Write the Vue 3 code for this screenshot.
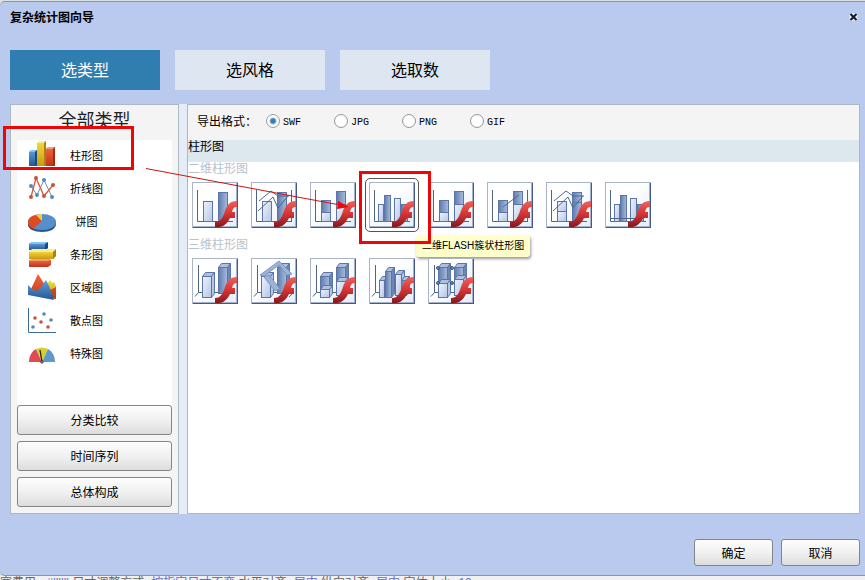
<template>
  <div class="page">
    <svg class="defs" width="0" height="0" aria-hidden="true">
      <defs>
        <linearGradient id="light" x1="0" y1="0" x2="1" y2="1"><stop offset="0" stop-color="#eef4fd"/><stop offset="1" stop-color="#b4c5e4"/></linearGradient>
        <linearGradient id="dark" x1="0" y1="0" x2="1" y2="0"><stop offset="0" stop-color="#5f7cae"/><stop offset="1" stop-color="#a9bbdc"/></linearGradient>
        <linearGradient id="flash" x1="0" y1="0" x2="0" y2="1"><stop offset="0" stop-color="#f0605a"/><stop offset="0.5" stop-color="#d43434"/><stop offset="1" stop-color="#86181c"/></linearGradient>
        <linearGradient id="blue" x1="0" y1="0" x2="0" y2="1"><stop offset="0" stop-color="#5ea0e0"/><stop offset="1" stop-color="#23598f"/></linearGradient>
        <linearGradient id="yellow" x1="0" y1="0" x2="0" y2="1"><stop offset="0" stop-color="#f7dc3e"/><stop offset="1" stop-color="#c89a10"/></linearGradient>
        <linearGradient id="red" x1="0" y1="0" x2="0" y2="1"><stop offset="0" stop-color="#f0683c"/><stop offset="1" stop-color="#c0341a"/></linearGradient>
      </defs>
    </svg>

    <div class="dialog">
      <!-- Title bar -->
      <div class="dialog-header">
        <span class="dialog-title">复杂统计图向导</span>
        <button class="close-btn" aria-label="关闭">
          <svg width="9" height="8" viewBox="0 0 9 8"><path d="M1.500 1L7.500 7M7.500 1L1.500 7" stroke="#fff" stroke-width="4"/><path d="M1.500 1L7.500 7M7.500 1L1.500 7" stroke="#111a30" stroke-width="2.200"/></svg>
        </button>
      </div>

      <!-- Wizard steps -->
      <div class="steps">
        <button v-for="s in steps" :key="s" class="step" :class="{ active: step === s }" @click="step = s">{{ s }}</button>
      </div>

      <div class="main">
        <!-- Type list -->
        <div class="side">
          <div class="side-title">全部类型</div>
          <div class="type-list">
            <button v-for="t in types" :key="t.key" class="type-row" @click="type = t.key">
              <svg width="28" height="28" viewBox="0 0 28 28">
                <g v-if="t.key === 'column'">
                  <path d="M1 11L3 9H9V25H1Z" fill="url(#blue)"/><path d="M1 11L3 9H9L7 11Z" fill="#8cc0ee"/><path d="M7 11L9 9V25H7Z" fill="#1c4a7c"/>
                  <path d="M18 8L20 6H27V25H18Z" fill="url(#red)"/><path d="M18 8L20 6H27L25 8Z" fill="#f59a7a"/><path d="M25 8L27 6V25H25Z" fill="#a02a14"/>
                  <path d="M9 2L12 0H18V25H9Z" fill="url(#yellow)"/><path d="M9 2L12 0H18L16 2Z" fill="#fbee8a"/><path d="M16 2L18 0V25H16Z" fill="#a98210"/>
                </g>
                <g v-else-if="t.key === 'line'">
                  <path d="M3 12L9 21L16 6L24 23" fill="none" stroke="#6590bd"/>
                  <path d="M3 23L8 4L16 22L25 11" fill="none" stroke="#d9583a" stroke-width="1.300"/>
                  <circle v-for="p in lineDots" :key="p[0] + '-' + p[1]" :cx="p[0]" :cy="p[1]" r="2" :fill="p[2]"/>
                </g>
                <g v-else-if="t.key === 'pie'">
                  <path d="M0 14V17C0 22 6 25 14 25S28 22 28 17V14Z" fill="#285b90"/>
                  <path d="M0 14V17C0 20 2 22 5 23L8 20Z" fill="#a82c12"/>
                  <ellipse cx="14" cy="15" rx="14" ry="8" fill="#568fc9"/>
                  <path d="M14 14L6 21C2 20 0 17 0 15C0 12 3 9 8 8Z" fill="#df4a22"/>
                  <path d="M14 14L8 8C10 7 12 7 14 7Z" fill="#f2cf38"/>
                </g>
                <g v-else-if="t.key === 'bar'">
                  <path d="M1 20H23V25L20 27H1Z" fill="url(#red)"/><path d="M1 21L3 19H23L20 21Z" fill="#f59a7a"/>
                  <path d="M1 3H20V8L17 10H1Z" fill="url(#blue)"/><path d="M1 4L3 2H20L17 4Z" fill="#8cc0ee"/><path d="M17 4L20 2V8L17 10Z" fill="#1c4a7c"/>
                  <path d="M1 11H28V16L25 19H1Z" fill="url(#yellow)"/><path d="M1 12L4 9H28L25 12Z" fill="#fbee8a"/><path d="M25 12L28 9V16L25 19Z" fill="#a98210"/>
                </g>
                <g v-else-if="t.key === 'area'">
                  <path d="M17 14L22 7L24 10L26 9L28 13V25L20 22Z" fill="url(#yellow)"/>
                  <path d="M3 16L10 1L17 12L22 17L28 14V26L14 24Z" fill="url(#red)"/>
                  <path d="M0 12L4 16L9 18L13 14L18 7L22 15L26 27L0 22Z" fill="url(#blue)"/>
                </g>
                <g v-else-if="t.key === 'scatter'">
                  <path d="M0.500 2V26.500H28" fill="none" stroke="#3c6a96"/>
                  <circle v-for="p in scatterDots" :key="p[0] + '-' + p[1]" :cx="p[0]" :cy="p[1]" r="1.800" :fill="p[2]"/>
                </g>
                <g v-else>
                  <path d="M14 23H1C1 17 4 12 8 10Z" fill="#e04a50"/>
                  <path d="M14 23L8 10C12 8 16 8 20 10Z" fill="#d8d02c"/>
                  <path d="M14 23L20 10C24 12 27 17 27 23Z" fill="#5e98cd"/>
                  <path d="M14 23L12 11" stroke="#222" stroke-width="1.300"/><circle cx="14" cy="23" r="1.200" fill="#fff" stroke="#222"/>
                </g>
              </svg>
              <span class="type-name">{{ t.name }}</span>
            </button>
          </div>
          <div class="side-actions">
            <button v-for="a in actions" :key="a" class="btn">{{ a }}</button>
          </div>
        </div>

        <!-- Chart gallery -->
        <div class="content">
          <div class="formats">
            <span class="formats-label">导出格式：</span>
            <label v-for="f in formats" :key="f" class="format"><input v-model="format" type="radio" name="format" :value="f"><span>{{ f }}</span></label>
          </div>
          <div class="content-title">柱形图</div>
          <div v-for="g in groups" :key="g.name" class="group">
            <div class="group-name">{{ g.name }}</div>
            <div class="charts">
              <button v-for="(c, i) in g.charts" :key="i" class="chart" :class="{ selected: c.selected }">
                <svg width="46" height="46" viewBox="0 0 46 46">
                  <path v-if="g.solid" d="M6.500 7V34.500L3 38.500M6.500 34.500H42" fill="none" stroke="#52647f"/>
                  <path v-else d="M5.500 8V39.500H41" fill="none" stroke="#52647f"/>
                  <template v-for="(b, j) in c.bars" :key="j">
                    <template v-if="g.solid">
                      <path :d="topFace(b)" fill="#aebfdf" stroke="#5b76a6"/>
                      <path :d="sideFace(b)" :fill="b[4] === 'dark' ? '#6c86b5' : '#b4c6e4'" stroke="#5b76a6"/>
                    </template>
                    <rect :x="b[0] + 0.5" :y="b[1] + 0.5" :width="b[2]" :height="b[3]" :fill="`url(#${b[4]})`" stroke="#5b76a6"/>
                  </template>
                  <path v-for="l in c.lines" :key="l" :d="l" fill="none" stroke="#4a6795" stroke-width="1"/>
                  <path v-for="r in c.ribbons" :key="r" :d="r" fill="#9db3d6" stroke="#7f98c2"/>
                  <circle v-for="d in c.dots" :key="d[0] + '-' + d[1]" :cx="d[0]" :cy="d[1]" r="1.500" fill="#6d87b4" stroke="#40597f"/>
                  <path d="M45 19C38 19 35 23 33 29C31 35 29 40 23 40V45C31 46 35 42 38 36H43V30H40C41 26 42 25 45 25Z" fill="url(#flash)"/>
                </svg>
                <span v-if="c.selected" class="tooltip">{{ c.tip }}</span>
              </button>
            </div>
          </div>
        </div>
      </div>

      <div class="dialog-footer">
        <button class="btn">确定</button>
        <button class="btn">取消</button>
      </div>
    </div>

    <!-- Property line behind the dialog -->
    <div class="behind">宽费用= <a href="#">#llllll</a> 尺寸调整方式=<a href="#">按指定尺寸不变</a> 水平对齐=<a href="#">居中</a> 纵向对齐=<a href="#">居中</a> 字体大小=<a href="#">12</a></div>

    <!-- Step marks -->
    <svg class="marks" width="440" height="250" viewBox="0 0 440 250" aria-hidden="true">
      <rect x="4.500" y="127.500" width="128" height="41" fill="none" stroke="#f00505" stroke-width="3"/>
      <rect x="360.500" y="172.500" width="69" height="70" fill="none" stroke="#f00505" stroke-width="3"/>
      <path d="M146 168.500L340 205" stroke="#cf1212"/>
      <path d="M349 207L337 209L338 201Z" fill="#f00505"/>
    </svg>
  </div>
</template>

<script setup>
import { ref } from 'vue'

const steps = ['选类型', '选风格', '选取数']
const step = ref('选类型')

const types = [
  { key: 'column',  name: '柱形图' },
  { key: 'line',    name: '折线图' },
  { key: 'pie',     name: '饼图' },
  { key: 'bar',     name: '条形图' },
  { key: 'area',    name: '区域图' },
  { key: 'scatter', name: '散点图' },
  { key: 'special', name: '特殊图' },
]
const type = ref('column')

const actions = ['分类比较', '时间序列', '总体构成']

const formats = ['SWF', 'JPG', 'PNG', 'GIF']
const format = ref('SWF')

const RED = '#cc5236'
const BLUE = '#5688bb'
const lineDots = [[3, 12, BLUE], [9, 21, BLUE], [16, 6, BLUE], [24, 23, BLUE], [3, 23, RED], [8, 4, RED], [16, 22, RED], [25, 11, RED]]
const scatterDots = [[7, 12, RED], [13, 16, RED], [20, 21, RED], [16, 8, BLUE], [23, 14, BLUE], [5, 21, BLUE]]

// bar: [x, y, width, height, fill]
const clustered = [[9, 22, 5, 17, 'light'], [15, 13, 6, 26, 'dark'], [25, 16, 6, 23, 'light'], [32, 22, 6, 17, 'dark']]
const stacked = [[11, 18, 9, 12, 'dark'], [11, 30, 9, 9, 'light'], [26, 9, 9, 13, 'dark'], [26, 22, 9, 17, 'light']]
const trend = ['M7 29L22 15L27 26L37 14', 'M8 19L20 9L27 14H38']

const groups = [
  {
    name: '二维柱形图',
    charts: [
      { bars: [[11, 19, 9, 20, 'light'], [26, 10, 9, 29, 'dark']] },
      { bars: [[11, 19, 9, 20, 'light'], [26, 10, 9, 29, 'dark']], lines: [...trend, 'M40.5 8V39'] },
      { bars: stacked },
      { bars: clustered, selected: true, tip: '二维FLASH簇状柱形图' },
      { bars: stacked },
      { bars: stacked, lines: ['M16 25L32 13', 'M40.5 8V39'] },
      { bars: [[11, 19, 9, 10, 'light'], [11, 29, 9, 10, 'light'], [26, 10, 9, 10, 'dark'], [26, 20, 9, 19, 'dark']], lines: trend },
      { bars: clustered, lines: ['M6 36.5H38'] },
    ],
  },
  {
    name: '三维柱形图',
    solid: true,
    charts: [
      { bars: [[10, 18, 9, 21, 'light'], [26, 9, 9, 26, 'dark']] },
      { bars: [[10, 18, 9, 21, 'light'], [26, 9, 9, 26, 'dark']], ribbons: ['M9 17L28 3L41 16L36 17L28 7L13 18Z', 'M13 19L18 17L29 31L24 33Z'], lines: ['M38 39L42 35'] },
      { bars: [[10, 18, 9, 13, 'dark'], [10, 31, 9, 8, 'light'], [26, 9, 9, 14, 'dark'], [26, 23, 9, 14, 'light']] },
      { bars: [[10, 22, 5, 17, 'light'], [16, 13, 6, 26, 'dark'], [26, 16, 6, 21, 'light'], [32, 22, 5, 15, 'dark']] },
      { bars: [[10, 9, 9, 16, 'dark'], [10, 25, 9, 14, 'light'], [26, 9, 9, 12, 'dark'], [26, 21, 9, 16, 'light']], dots: [[10, 10], [10, 25], [24, 10], [24, 25]] },
    ],
  },
]

function topFace([x, y, w]) {
  return `M${x + 0.5} ${y + 0.5}l3 -4h${w}l-3 4z`
}

function sideFace([x, y, w, h]) {
  return `M${x + w + 0.5} ${y + 0.5}l3 -4v${h}l-3 4z`
}
</script>

<style>
body { margin: 0; }
</style>

<style scoped>
.page {
  position: relative;
  display: flex;
  flex-direction: column;
  min-height: 100vh;
  padding-top: 1px;
  box-sizing: border-box;
  background: #d9e1e2;
  font-family: "Liberation Sans", "Noto Sans CJK SC", sans-serif;
  font-size: 12px;
  color: #000;
}
button { font-family: inherit; color: inherit; cursor: pointer; }
.defs { position: absolute; }

.dialog {
  flex: 1;
  display: flex;
  flex-direction: column;
  padding: 0 5px 9px 10px;
  border-top: 1px solid #8c969c;
  border-bottom: 1px solid #8c969c;
  border-radius: 5px 0 0 5px;
  background: #bac9ee;
}
.dialog-header { display: flex; justify-content: space-between; align-items: flex-start; height: 40px; padding-top: 8px; }
.dialog-title { font-weight: 700; line-height: 16px; }
.close-btn { display: flex; padding: 3px 2px; border: none; background: none; }

.steps { display: flex; gap: 15px; }
.step { width: 150px; height: 40px; padding: 0 0 2px; border: none; background: #dee6f1; font-size: 16px; }
.step.active { background: #307eb0; color: #fff; }

.main { flex: 1; display: flex; gap: 8px; margin-top: 14px; background: linear-gradient(#e4edf6, #e4edf6) 169px 0 / 8px 100% no-repeat; }
.side { display: flex; flex-direction: column; width: 169px; box-sizing: border-box; padding: 0 6px 6px; border: 1px solid #adb9c1; background: #f4f4f4; }
.side-title { height: 35px; line-height: 32px; font-size: 18px; text-align: center; color: #222; }
.type-list { flex: 1; display: flex; flex-direction: column; background: #fff; }
.type-row { display: flex; align-items: center; gap: 14px; height: 33px; padding: 0 11px 3px; border: none; background: none; }
.type-name { width: 33px; font-size: 11px; text-align: center; }
.side-actions { display: flex; flex-direction: column; gap: 6px; }
.btn { height: 30px; padding: 0; border: 1px solid #858585; border-radius: 3px; background: linear-gradient(#fdfdfd, #f1f1f1 50%, #dcdcdc); font-size: 12px; }
.side-actions .btn { padding-bottom: 2px; }

.content { flex: 1; min-width: 0; border: 1px solid #adb9c1; background: #fff; }
.formats { display: flex; align-items: center; height: 35px; padding-left: 9px; padding-bottom: 4px; box-sizing: border-box; background: #f4f4f4; }
.formats-label { width: 69px; }
.format { display: flex; align-items: center; gap: 3px; width: 68px; font-family: "Liberation Mono", monospace; font-size: 10px; }
.format span { padding-top: 3px; }
.format input { appearance: none; width: 14px; height: 14px; margin: 0; border: 1px solid #999; border-radius: 50%; background: radial-gradient(#fff 55%, #e4e4e4); }
.format input:checked { background: radial-gradient(#2f80b8 2px, #fff 4px); }
.content-title { height: 22px; line-height: 15px; background: #dde7ee; }
.group { margin-bottom: 10px; }
.group-name { height: 12px; line-height: 14px; color: #b8c2ce; }
.charts { display: flex; flex-wrap: wrap; gap: 13px; padding: 8px 4px 0; }
.chart {
  position: relative;
  width: 46px;
  height: 46px;
  padding: 0;
  border: none;
  background: linear-gradient(135deg, #fff 40%, #e4edf9);
  box-shadow: inset 1px 1px #a9b4c6, inset -1px -1px #44598a, inset -2px -2px #a3b2cf;
}
.chart svg { display: block; }
.chart.selected { outline: 1px solid #555; outline-offset: 3px; border-radius: 1px; }
.tooltip {
  position: absolute;
  left: 47px;
  top: 53px;
  padding: 0 6px;
  border-radius: 3px;
  background: #ffffcc;
  box-shadow: 1px 2px 3px #999;
  font-size: 10px;
  line-height: 22px;
  white-space: nowrap;
}

.dialog-footer { display: flex; justify-content: flex-end; gap: 8px; margin-top: 25px; }
.dialog-footer .btn { width: 79px; height: 27px; }

.behind { height: 4px; overflow: hidden; background: #f1f1f1; line-height: 14px; white-space: nowrap; color: #666; }
.behind a { color: #6b6bd0; }

.marks { position: absolute; left: 0; top: 0; pointer-events: none; }
</style>
